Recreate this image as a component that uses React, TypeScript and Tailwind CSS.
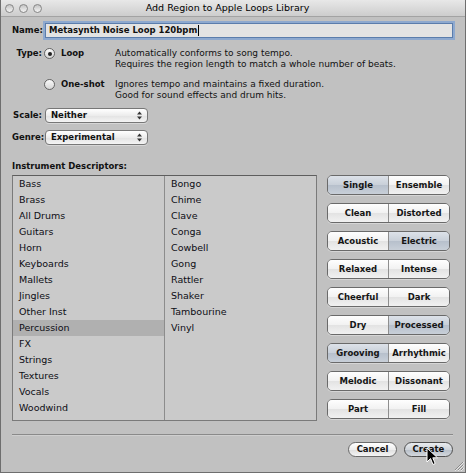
import React from 'react';

const font = "font-['DejaVu_Sans',sans-serif]";

const instruments = ['Bass', 'Brass', 'All Drums', 'Guitars', 'Horn', 'Keyboards', 'Mallets', 'Jingles', 'Other Inst', 'Percussion', 'FX', 'Strings', 'Textures', 'Vocals', 'Woodwind'];
const subInstruments = ['Bongo', 'Chime', 'Clave', 'Conga', 'Cowbell', 'Gong', 'Rattler', 'Shaker', 'Tambourine', 'Vinyl'];

// 0 = left selected, 1 = right selected, -1 = none
const descriptors: [string, string, number][] = [
  ['Single', 'Ensemble', 0],
  ['Clean', 'Distorted', -1],
  ['Acoustic', 'Electric', 1],
  ['Relaxed', 'Intense', -1],
  ['Cheerful', 'Dark', -1],
  ['Dry', 'Processed', 1],
  ['Grooving', 'Arrhythmic', 0],
  ['Melodic', 'Dissonant', -1],
  ['Part', 'Fill', -1],
];

const plain = 'bg-[linear-gradient(to_bottom,#fefefe_0%,#f2f2f2_48%,#e3e3e3_52%,#f1f1f1_100%)]';
const picked = 'bg-[linear-gradient(to_bottom,#dde2e9_0%,#c9d0d9_48%,#b7c0cc_52%,#c8cfd8_100%)]';

const Radio = ({ on }: { on: boolean }) => (
  <div className="w-[11px] h-[11px] rounded-full border border-[#646464] bg-[linear-gradient(to_bottom,#fafafa,#d6d6d6)] flex items-center justify-center shrink-0">
    {on && <div className="w-[4px] h-[4px] rounded-full bg-[#222]" />}
  </div>
);

const Popup = ({ value }: { value: string }) => (
  <div className="w-[103px] h-[15px] rounded-[4px] border border-[#777] bg-[linear-gradient(to_bottom,#ffffff,#ececec_50%,#e2e2e2_51%,#f4f4f4)] flex items-center pl-[5px] pr-[5px] shadow-[0_1px_0_rgba(255,255,255,0.35)]">
    <span className="flex-1 text-[8.5px] font-bold text-[#111] leading-none">{value}</span>
    <svg width="5" height="9" viewBox="0 0 5 9">
      <path d="M0 3.5 L2.5 0.5 L5 3.5 Z" fill="#333" />
      <path d="M0 5.5 L2.5 8.5 L5 5.5 Z" fill="#333" />
    </svg>
  </div>
);

const Label = ({ children }: { children: React.ReactNode }) => (
  <div className="w-[30px] text-right text-[8.5px] font-bold text-[#111] leading-[11px] shrink-0">{children}</div>
);

export default function App() {
  return (
    <div className={`relative w-[466px] h-[473px] bg-[#c1c1c1] border-x border-b border-[#6e6e6e] flex flex-col overflow-hidden ${font}`}>
      {/* title bar */}
      <div className="h-[17px] flex items-center bg-[linear-gradient(to_bottom,#e8e8e8,#cdcdcd)] border-b border-[#a3a3a3] shrink-0">
        <div className="w-[45px] flex items-center gap-[5px] pl-[4px]">
          {[0, 1, 2].map((i) => (
            <div key={i} className="w-[9px] h-[9px] rounded-full border border-[#868686] bg-[linear-gradient(to_bottom,#c4c4c4,#f4f4f4)]" />
          ))}
        </div>
        <div className="flex-1 text-center text-[9.5px] text-black leading-none">Add Region to Apple Loops Library</div>
        <div className="w-[56px]" />
      </div>

      <div className="flex flex-col pl-[11px] pr-[12px]">
        {/* name */}
        <div className="mt-[6px] flex items-center h-[15px]">
          <Label>Name:</Label>
          <div className="ml-[3px] flex-1 h-[15px] border border-[#5b7dac] bg-[#e3e3e3] shadow-[0_0_0_2px_#8ea9cf] flex items-center pl-[3px]">
            <span className="text-[8.5px] font-bold text-[#111] leading-none">Metasynth Noise Loop 120bpm</span>
            <span className="w-px h-[11px] bg-black ml-px" />
          </div>
        </div>

        {/* type */}
        <div className="mt-[10px] flex">
          <Label>Type:</Label>
          <div className="ml-[2px] flex flex-col">
            <div className="flex">
              <div className="w-[71px] flex items-start gap-[6px]">
                <Radio on />
                <span className="text-[8.5px] font-bold text-[#111] leading-[11px]">Loop</span>
              </div>
              <div className="text-[9px] text-[#111] leading-[11px]">
                <div>Automatically conforms to song tempo.</div>
                <div>Requires the region length to match a whole number of beats.</div>
              </div>
            </div>
            <div className="flex mt-[9px]">
              <div className="w-[71px] flex items-start gap-[6px]">
                <Radio on={false} />
                <span className="text-[8.5px] font-bold text-[#111] leading-[11px]">One-shot</span>
              </div>
              <div className="text-[9px] text-[#111] leading-[11px]">
                <div>Ignores tempo and maintains a fixed duration.</div>
                <div>Good for sound effects and drum hits.</div>
              </div>
            </div>
          </div>
        </div>

        {/* scale / genre */}
        <div className="mt-[7px] flex items-center">
          <Label>Scale:</Label>
          <div className="ml-[3px]"><Popup value="Neither" /></div>
        </div>
        <div className="mt-[7px] flex items-center">
          <Label>Genre:</Label>
          <div className="ml-[3px]"><Popup value="Experimental" /></div>
        </div>

        <div className="mt-[16px] text-[8.5px] font-bold text-[#111] leading-[11px]">Instrument Descriptors:</div>

        {/* list + descriptors */}
        <div className="mt-[3px] flex items-start">
          <div className="w-[305px] h-[246px] border border-[#7a7a7a] border-t-[#5e5e5e] bg-[#cacaca] flex">
            <div className="w-[152px] border-r border-[#8c8c8c] flex flex-col">
              {instruments.map((n) => (
                <div key={n} className={`h-[16px] flex items-center pl-[6px] text-[9.5px] text-[#0d0d14] ${n === 'Percussion' ? 'bg-[#b0b0b0]' : ''}`}>{n}</div>
              ))}
            </div>
            <div className="flex-1 flex flex-col">
              {subInstruments.map((n) => (
                <div key={n} className="h-[16px] flex items-center pl-[6px] text-[9.5px] text-[#0d0d14]">{n}</div>
              ))}
            </div>
          </div>

          <div className="ml-[10px] w-[123px] flex flex-col gap-[8px]">
            {descriptors.map(([a, b, s]) => (
              <div key={a} className="h-[20px] flex rounded-[5px] border border-[#6a6a6a] overflow-hidden shadow-[0_1px_0_rgba(255,255,255,0.35)]">
                <div className={`flex-1 flex items-center justify-center border-r border-[#8e8e8e] text-[8.5px] font-bold text-[#151515] ${s === 0 ? picked : plain}`}>{a}</div>
                <div className={`flex-1 flex items-center justify-center text-[8.5px] font-bold text-[#151515] ${s === 1 ? picked : plain}`}>{b}</div>
              </div>
            ))}
          </div>
        </div>

        {/* separator */}
        <div className="mt-[13px] h-[2px] border-t border-[#8a8a8a] border-b border-b-[#cfcfcf]" />

        {/* buttons */}
        <div className="mt-[6px] flex justify-end gap-[7px]">
          <div className="w-[49px] h-[15px] rounded-full border border-[#6b6b6b] bg-[linear-gradient(to_bottom,#ffffff,#eeeeee_50%,#dedede_51%,#f5f5f5)] flex items-center justify-center text-[8.5px] font-bold text-[#111] leading-none">Cancel</div>
          <div className="w-[49px] h-[15px] rounded-full border border-[#505050] bg-[linear-gradient(to_bottom,#e9ecef,#cfd4da_50%,#b7bec7_51%,#d3d8de)] flex items-center justify-center text-[8.5px] font-bold text-[#111] leading-none">Create</div>
        </div>
      </div>

      {/* mouse pointer */}
      <svg className="absolute left-[425px] top-[447px]" width="13" height="20" viewBox="0 0 13 20">
        <path d="M1 1 L1 15 L4.5 11.5 L7 17.5 L9.2 16.5 L6.8 10.8 L11.5 10.8 Z" fill="#000" stroke="#fff" strokeWidth="1" strokeLinejoin="round" />
      </svg>

      {/* resize grip */}
      <svg className="absolute right-[1px] bottom-[1px]" width="11" height="11" viewBox="0 0 11 11">
        <path d="M10 2 L2 10 M10 5 L5 10 M10 8 L8 10" stroke="#8a8a8a" strokeWidth="1" />
        <path d="M11 2 L2 11 M11 5 L5 11 M11 8 L8 11" stroke="#e6e6e6" strokeWidth="1" />
      </svg>
    </div>
  );
}
